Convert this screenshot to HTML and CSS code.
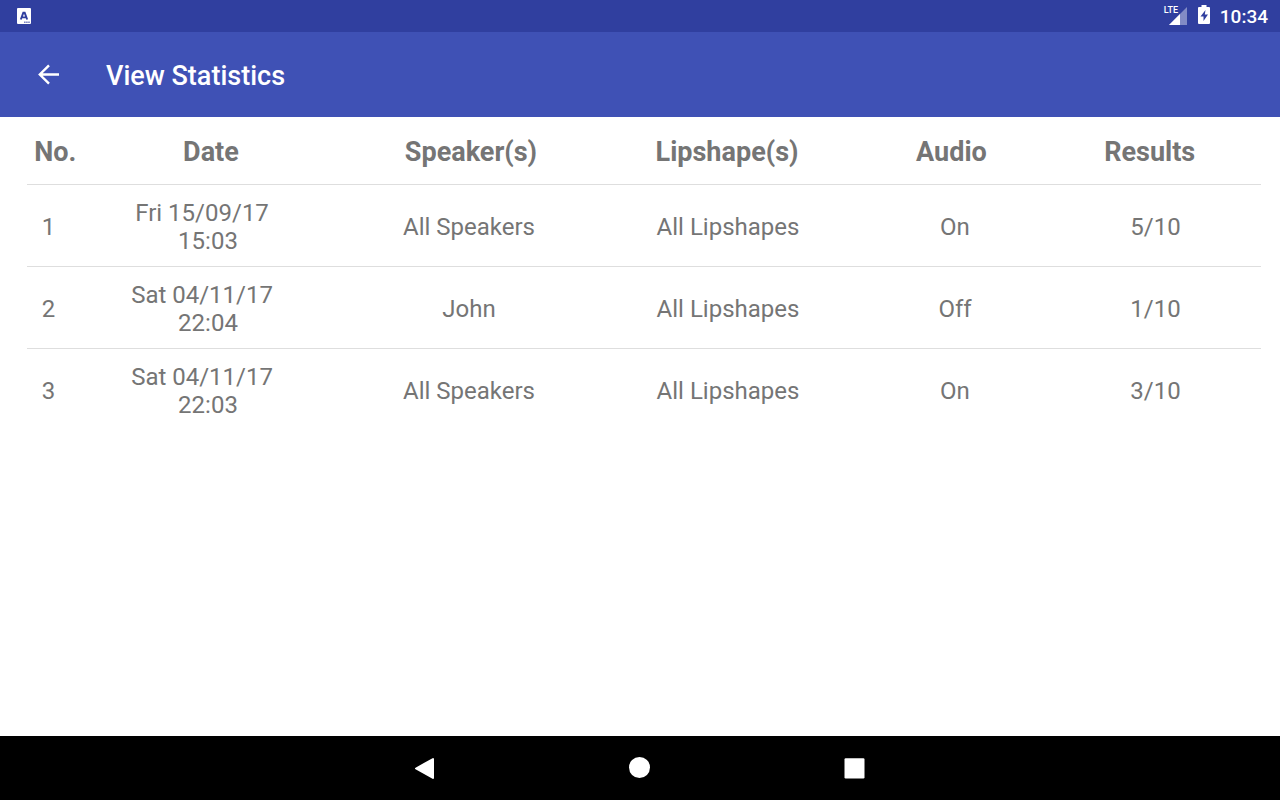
FILE: index.html
```html
<!DOCTYPE html>
<html lang="en">
<head>
<meta charset="utf-8">
<meta name="viewport" content="width=device-width, initial-scale=1">
<title>View Statistics</title>
<link rel="stylesheet" href="styles.css">
</head>
<body>
<div class="status-bar">
  <svg class="status-app" width="14" height="16" viewBox="0 0 14 16" aria-hidden="true">
    <rect width="14" height="16" rx="1" fill="#fff"/>
    <path d="M3.800 11.500 6.300 4.800h1.400l2.500 6.700M4.800 9.400h4.400" fill="none" stroke="#303f9f" stroke-width="1.900"/>
    <path d="M7 14.200h6" stroke="#303f9f" stroke-width="1.400" stroke-dasharray="1.600 .5" opacity=".65"/>
  </svg>
  <div class="status-right">
    <div class="signal">
      <svg width="24" height="20" viewBox="0 0 24 20" aria-hidden="true">
        <path d="M23 1v18H5z" fill="#fff" opacity=".4"/>
        <path d="M16 8v11H5z" fill="#fff"/>
      </svg>
      <span class="signal-label">LTE</span>
    </div>
    <svg width="12" height="20" viewBox="0 0 12 20" aria-hidden="true">
      <path fill="#fff" fill-rule="evenodd" d="M3.500 0h5v2H11q1 0 1 1v15q0 1-1 1H1q-1 0-1-1V3q0-1 1-1h2.500zM7.500 5 2.500 11.500h3v4.500l4.500-6.500H6.800z"/>
    </svg>
    <time class="clock">10:34</time>
  </div>
</div>
<header class="app-bar">
  <button class="back" type="button" aria-label="Navigate up">
    <svg width="22" height="22" viewBox="0 0 22 22" aria-hidden="true"><path d="M21 10.500H2M11 1.300 1.800 10.500l9.200 9.200" fill="none" stroke="#fff" stroke-width="2.400"/></svg>
  </button>
  <h1 class="title">View Statistics</h1>
</header>
<main class="content">
  <table class="stats">
    <thead>
      <tr><th scope="col">No.</th><th scope="col">Date</th><th scope="col">Speaker(s)</th><th scope="col">Lipshape(s)</th><th scope="col">Audio</th><th scope="col">Results</th></tr>
    </thead>
    <tbody>
      <tr><td>1</td><td>Fri 15/09/17&nbsp;&nbsp;<br>15:03</td><td>All Speakers</td><td>All Lipshapes</td><td>On</td><td>5/10</td></tr>
      <tr><td>2</td><td>Sat 04/11/17&nbsp;&nbsp;<br>22:04</td><td>John</td><td>All Lipshapes</td><td>Off</td><td>1/10</td></tr>
      <tr><td>3</td><td>Sat 04/11/17&nbsp;&nbsp;<br>22:03</td><td>All Speakers</td><td>All Lipshapes</td><td>On</td><td>3/10</td></tr>
    </tbody>
  </table>
</main>
<nav class="nav-bar" aria-label="System">
  <button type="button" aria-label="Back"><svg width="22" height="24" viewBox="0 0 22 24" aria-hidden="true"><path d="M19 3v19L2 12.500z" fill="#fff" stroke="#fff" stroke-width="2" stroke-linejoin="round"/></svg></button>
  <button type="button" aria-label="Home"><svg width="22" height="24" viewBox="0 0 22 24" aria-hidden="true"><circle cx="10.500" cy="11.500" r="10.500" fill="#fff"/></svg></button>
  <button type="button" aria-label="Recent apps"><svg width="22" height="24" viewBox="0 0 22 24" aria-hidden="true"><rect x="0.500" y="2.300" width="20" height="20.200" rx="1.200" fill="#fff"/></svg></button>
</nav>
</body>
</html>
```
FILE: styles.css
```css
* {
  box-sizing: border-box;
}

body {
  margin: 0;
  min-height: 100vh;
  display: flex;
  flex-direction: column;
  background: #fff;
  color: #757575;
  font-family: Roboto, "Noto Sans", sans-serif;
}

button {
  display: flex;
  align-items: center;
  justify-content: center;
  padding: 0;
  border: 0;
  background: none;
}

svg {
  display: block;
}

.status-bar {
  display: flex;
  align-items: center;
  justify-content: space-between;
  height: 32px;
  padding: 0 12px 0 17px;
  background: #303f9f;
  color: #fff;
}

.status-right {
  display: flex;
  align-items: center;
  gap: 10px;
  height: 32px;
  padding-bottom: 2px;
}

.signal {
  position: relative;
  padding-top: 2px;
}

.signal-label {
  position: absolute;
  top: 0;
  left: 0;
  font-size: 9px;
  font-weight: 500;
  line-height: 12px;
}

.clock {
  font-size: 19px;
  font-weight: 500;
  line-height: 24px;
  padding-top: 4px;
}

.app-bar {
  display: flex;
  align-items: center;
  gap: 32px;
  height: 85px;
  padding: 0 24px;
  background: #3f51b5;
  color: #fff;
}

.back {
  width: 50px;
  height: 50px;
}

.title {
  margin: 0;
  padding-top: 2px;
  font-size: 27px;
  font-weight: 500;
  line-height: 32px;
}

.content {
  flex: 1;
  padding: 0 19px 0 27px;
}

.stats,
.stats thead,
.stats tbody {
  display: block;
}

.stats tr {
  display: grid;
  grid-template-columns:
    minmax(0, 47fr) minmax(0, 268fr) minmax(0, 254fr)
    minmax(0, 264fr) minmax(0, 190fr) minmax(0, 211fr);
  align-items: center;
  text-align: center;
}

.stats thead tr {
  padding: 19px 7px 16px;
}

.stats tbody tr {
  min-height: 82px;
  border-top: 1px solid #dedede;
}

.stats th,
.stats td {
  padding: 0;
}

.stats th {
  font-size: 27px;
  font-weight: 700;
  line-height: 32px;
}

.stats td {
  padding-top: 2px;
  font-size: 24px;
  line-height: 28px;
}

.stats td:first-child,
.stats th:nth-child(-n + 2) {
  padding-right: 4px;
}

.nav-bar {
  display: flex;
  justify-content: center;
  gap: 87px;
  height: 64px;
  background: #000;
}

.nav-bar button {
  width: 128px;
}
```
